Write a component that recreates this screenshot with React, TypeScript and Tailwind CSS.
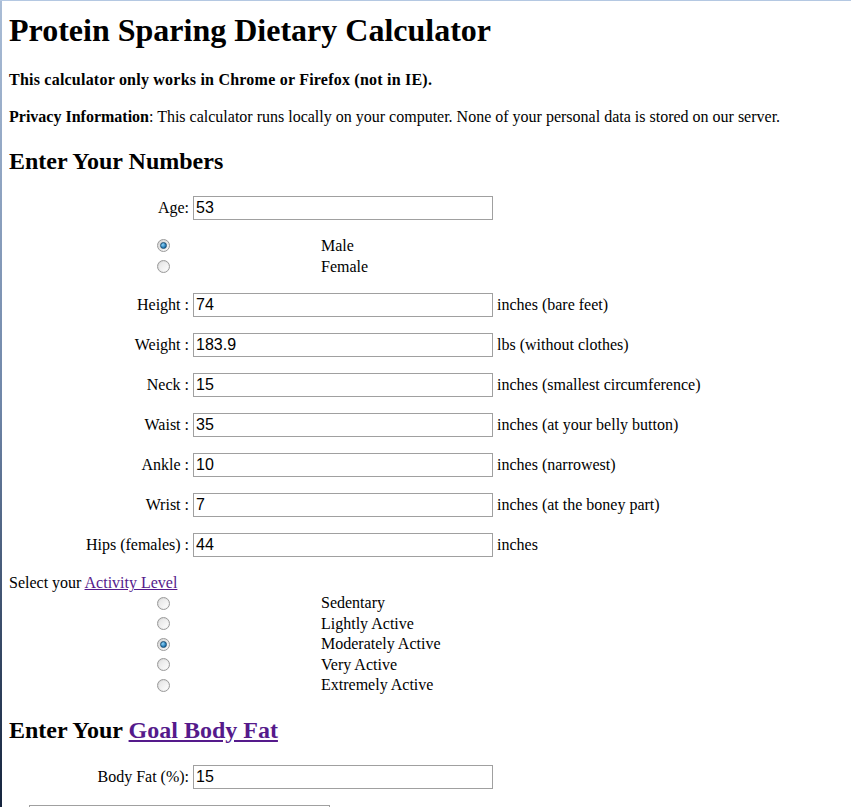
import React from "react";

const serif = { fontFamily: '"Liberation Serif", "Times New Roman", serif' };

function Radio({ checked }: { checked?: boolean }) {
  return (
    <span className="flex h-[13px] w-[13px] items-center justify-center rounded-full border border-[#9a9a9a] bg-gradient-to-br from-[#d4d4d4] to-[#fafafa]">
      {checked ? (
        <span className="h-[7px] w-[7px] rounded-full border border-[#1d4f73] bg-[radial-gradient(circle_at_35%_35%,#8fd4f8,#1a72b0_70%)]" />
      ) : (
        <span className="h-[9px] w-[9px] rounded-full bg-gradient-to-br from-[#e4e4e4] to-[#fdfdfd]" />
      )}
    </span>
  );
}

function RadioRow({ label, checked, h }: { label: string; checked?: boolean; h: string }) {
  return (
    <div className={`flex items-center ${h}`}>
      <div className="ml-[148px] w-[13px]">
        <Radio checked={checked} />
      </div>
      <span className="ml-[151px]">{label}</span>
    </div>
  );
}

function FieldRow({ label, value, suffix, mt }: { label: string; value: string; suffix?: string; mt: string }) {
  return (
    <div className={`flex h-[24px] items-center ${mt}`}>
      <div className="w-[184px] pr-[4px] text-right whitespace-nowrap">{label}</div>
      <div
        className="flex h-[24px] w-[300px] items-center border border-[#a0a0a0] bg-white pl-[2px] text-[16px] text-black"
        style={{ fontFamily: '"Liberation Sans", Arial, sans-serif' }}
      >
        {value}
      </div>
      {suffix ? <span className="ml-[4px] whitespace-nowrap">{suffix}</span> : null}
    </div>
  );
}

export default function App() {
  return (
    <div className="flex h-[807px] w-[851px] overflow-hidden border-t border-[#b4c8e2] bg-white text-[16px] text-black" style={serif}>
      <div className="w-[2px] shrink-0 bg-gradient-to-b from-[#aabdd6] via-[#6f86a8] to-[#15243d]" />
      <div className="flex-1 pl-[7px]">
        <h1 className="mt-[11px] h-[37px] text-[32px] leading-[37px] font-bold">Protein Sparing Dietary Calculator</h1>
        <p className="mt-[22px] h-[18px] leading-[18px] font-bold text-[16px] tracking-[0.22px]">
          This calculator only works in Chrome or Firefox (not in IE).
        </p>
        <p className="mt-[19px] h-[18px] leading-[18px] text-[16px]">
          <b>Privacy Information</b>: This calculator runs locally on your computer. None of your personal data is stored on our server.
        </p>
        <h2 className="mt-[21px] h-[28px] text-[24px] leading-[28px] font-bold">Enter Your Numbers</h2>

        <FieldRow label="Age:" value="53" mt="mt-[21px]" />

        <div className="mt-[15px]">
          <RadioRow label="Male" checked h="h-[21px]" />
          <RadioRow label="Female" h="h-[21px]" />
        </div>

        <FieldRow label="Height :" value="74" suffix="inches (bare feet)" mt="mt-[16px]" />
        <FieldRow label="Weight :" value="183.9" suffix="lbs (without clothes)" mt="mt-[16px]" />
        <FieldRow label="Neck :" value="15" suffix="inches (smallest circumference)" mt="mt-[16px]" />
        <FieldRow label="Waist :" value="35" suffix="inches (at your belly button)" mt="mt-[16px]" />
        <FieldRow label="Ankle :" value="10" suffix="inches (narrowest)" mt="mt-[16px]" />
        <FieldRow label="Wrist :" value="7" suffix="inches (at the boney part)" mt="mt-[16px]" />
        <FieldRow label="Hips (females) :" value="44" suffix="inches" mt="mt-[16px]" />

        <div className="mt-[17px] h-[18px] leading-[18px]">
          Select your{" "}
          <a href="#" className="text-[#551a8b] underline">
            Activity Level
          </a>
        </div>
        <div className="mt-[1px]">
          <RadioRow label="Sedentary" h="h-[20.5px]" />
          <RadioRow label="Lightly Active" h="h-[20.5px]" />
          <RadioRow label="Moderately Active" checked h="h-[20.5px]" />
          <RadioRow label="Very Active" h="h-[20.5px]" />
          <RadioRow label="Extremely Active" h="h-[20.5px]" />
        </div>

        <h2 className="mt-[20px] h-[28px] text-[24px] leading-[28px] font-bold">
          Enter Your{" "}
          <a href="#" className="text-[#551a8b] underline">
            Goal Body Fat
          </a>
        </h2>

        <FieldRow label="Body Fat (%):" value="15" mt="mt-[21px]" />

        <div className="ml-[20px] mt-[16px] h-[40px] w-[301px] border border-[#a0a0a0]" />
      </div>
    </div>
  );
}
